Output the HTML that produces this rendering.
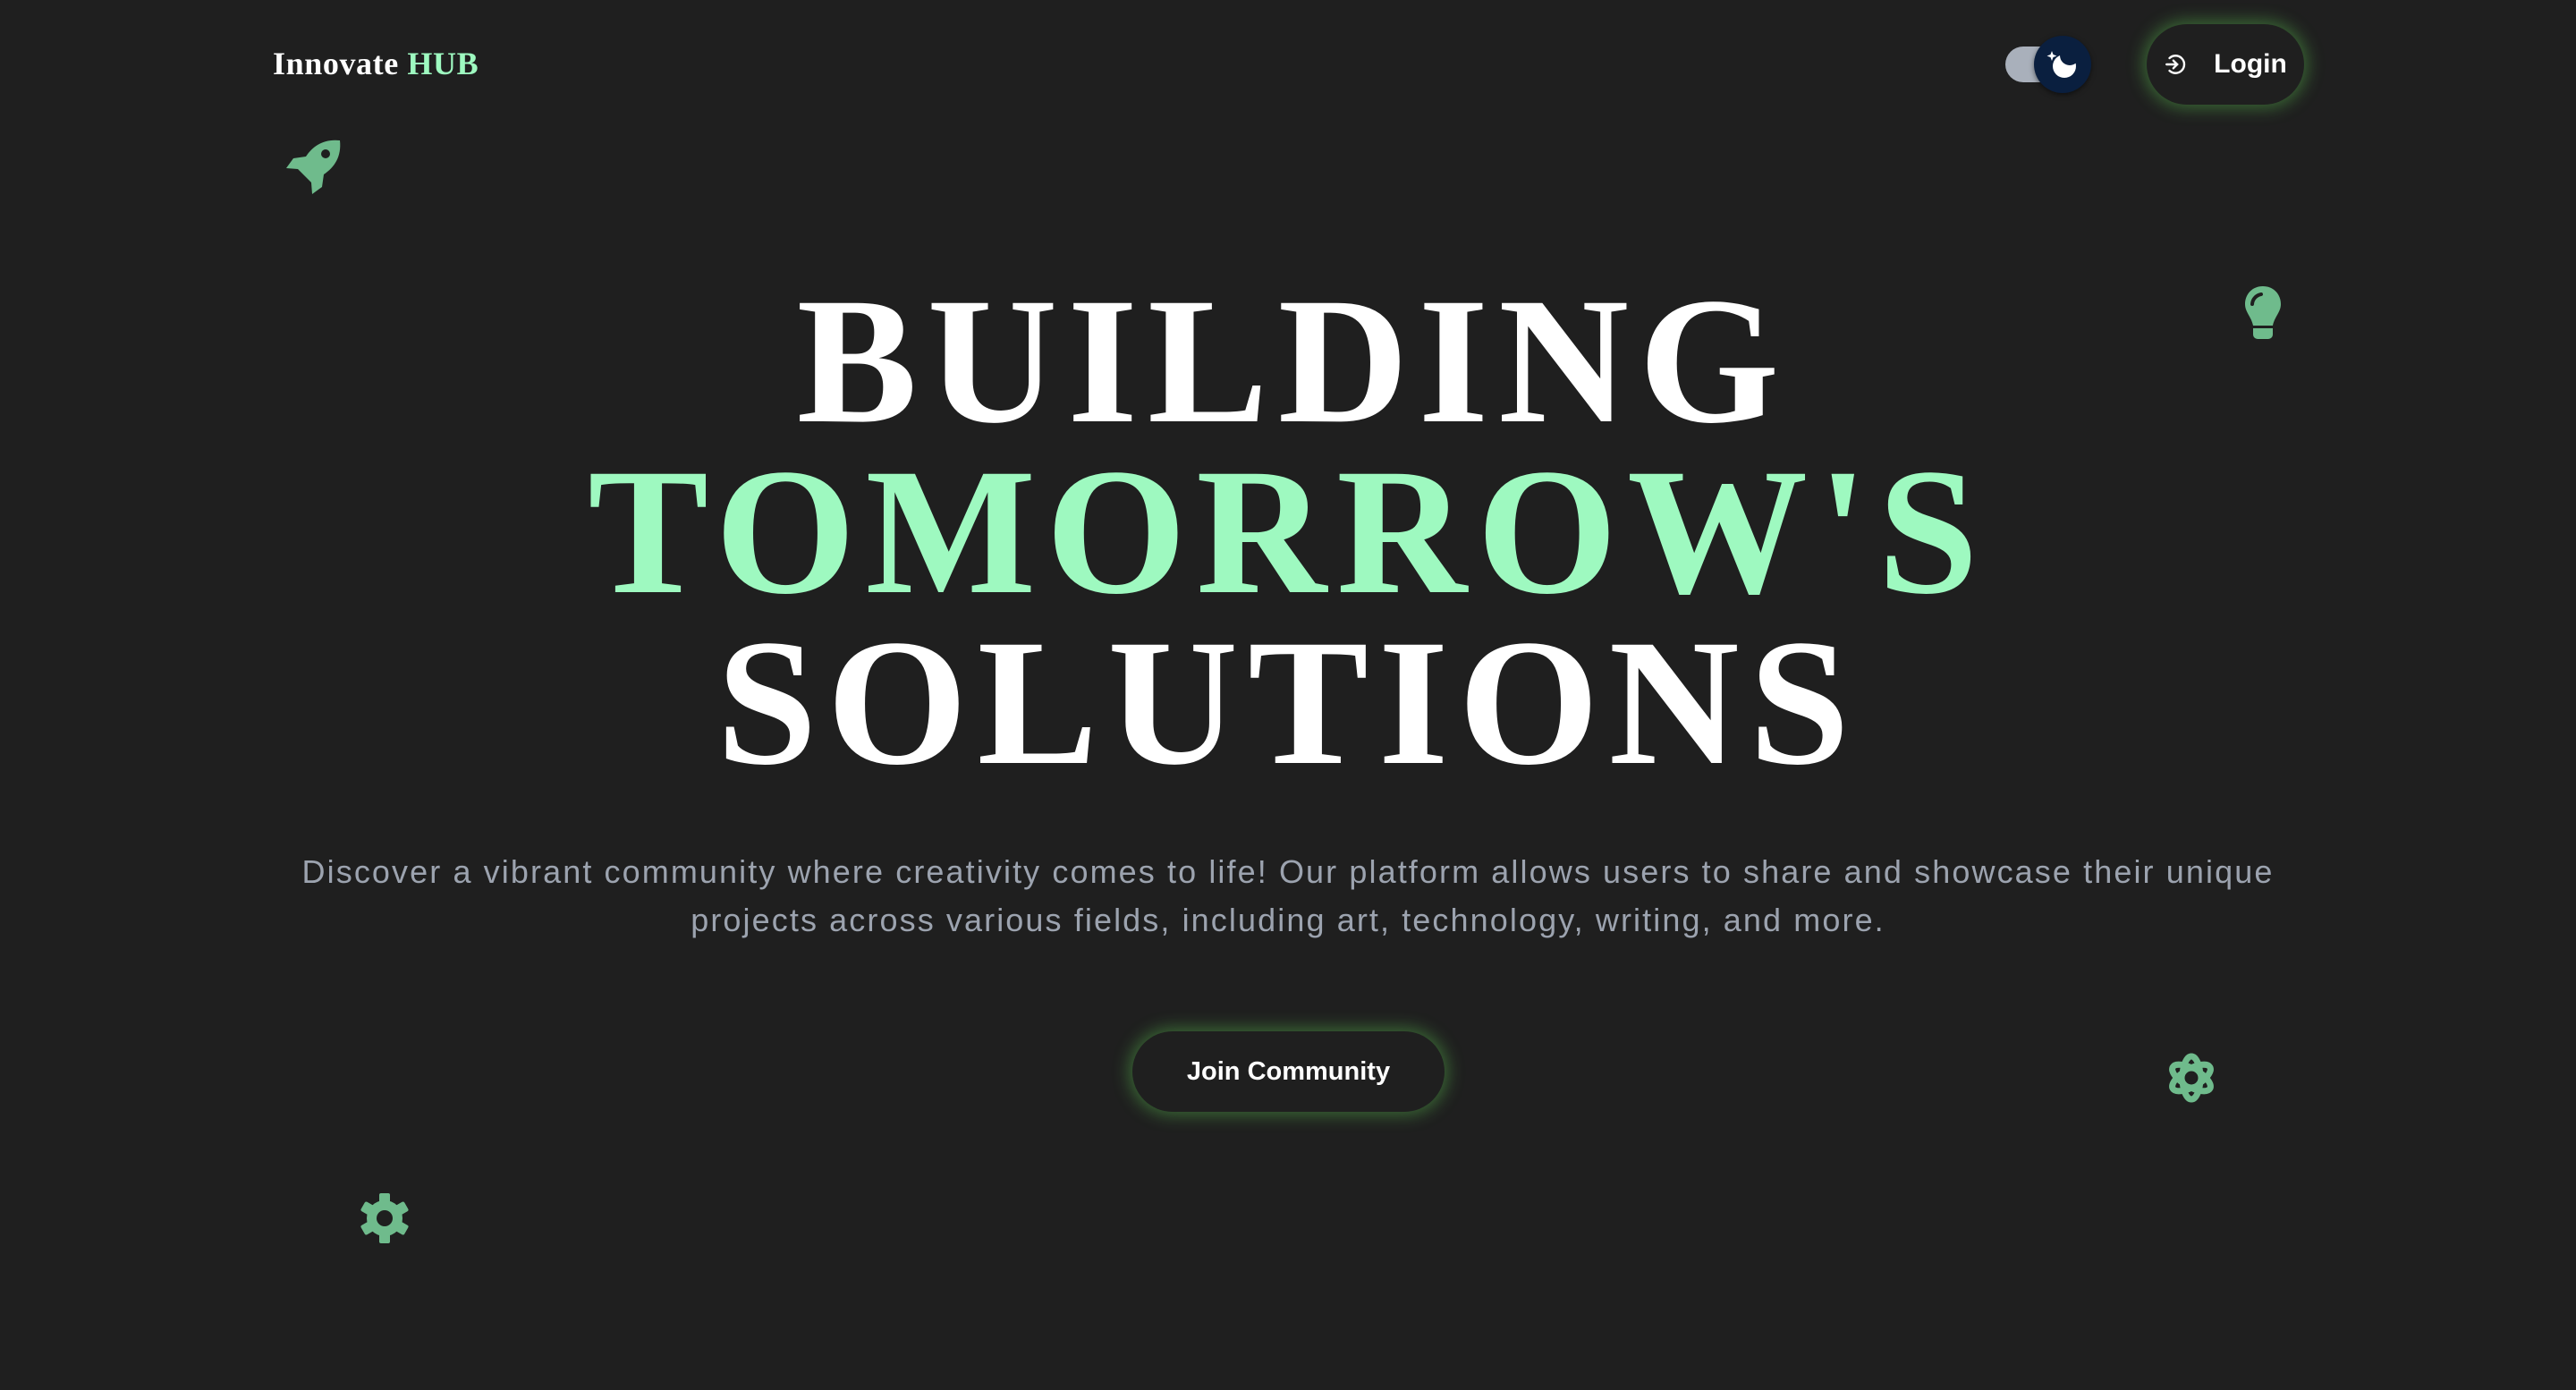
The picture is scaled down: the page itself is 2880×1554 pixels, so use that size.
<!DOCTYPE html>
<html><head><meta charset="utf-8"><style>
*{margin:0;padding:0;box-sizing:border-box}
body{width:2880px;height:1554px;background:#1f1f1f;overflow:hidden;position:relative;font-family:"Liberation Sans",sans-serif}
.abs{position:absolute}
.logo{left:305px;top:50px;font-family:"Liberation Serif",serif;font-weight:bold;font-size:36px;letter-spacing:0.6px;color:#fff;white-space:nowrap}
.logo span{color:#9ef9c0}
.h{left:0;width:2880px;text-align:center;font-family:"Liberation Serif",serif;font-weight:bold;font-size:202px;line-height:191px;top:308px;color:#fff;white-space:nowrap;letter-spacing:11px;text-indent:11px}
.h .g{color:#9ef9c0}
.p{left:0;width:2880px;top:948px;text-align:center;font-size:36px;line-height:54px;color:#9ca3af;letter-spacing:2.1px;white-space:nowrap}
.btn{background:#1f1f1f;border-radius:45px;height:90px;color:#fff;font-weight:bold;display:flex;align-items:center;justify-content:center;box-shadow:0 0 18px 4px rgba(90,190,80,0.45)}
</style></head><body>
<div class="abs logo">Innovate <span>HUB</span></div>

<div class="abs" style="left:2242px;top:52px;width:62px;height:40px;border-radius:20px;background:#a9b0bb"></div>
<div class="abs" style="left:2274px;top:40px;width:64px;height:64px;border-radius:50%;background:#0a1f3f;box-shadow:0 2px 6px rgba(0,0,0,.5)">
<svg width="64" height="64" viewBox="0 0 64 64"><defs><mask id="m"><rect width="64" height="64" fill="#fff"/><circle cx="40" cy="22" r="11" fill="#000"/></mask></defs><circle cx="34" cy="34" r="13" fill="#fff" mask="url(#m)"/><path d="M20 17 l1.5 4 4 1.5 -4 1.5 -1.5 4 -1.5 -4 -4 -1.5 4 -1.5z" fill="#fff"/></svg></div>

<div class="abs btn" style="left:2400px;top:27px;width:176px;font-size:30px">
<svg width="26" height="26" viewBox="0 0 24 24" style="margin-right:30px" fill="none" stroke="#fff" stroke-width="2.2" stroke-linecap="round"><path d="M6 5.5A9 9 0 1 1 6 18.5"/><path d="M3 12h11M10 8l4 4-4 4"/></svg>Login</div>

<svg class="abs" style="left:318px;top:153px" width="66" height="66" viewBox="0 0 66 66"><path d="M62 4 C44 2 32 10 24 22 L10 24 L2 35 L15 36 L30 51 L31 64 L42 56 L44 42 C56 34 64 22 62 4Z" fill="#6fbb8c"/><circle cx="46" cy="19" r="5" fill="#1f1f1f"/></svg>

<svg class="abs" style="left:2508px;top:318px" width="44" height="64" viewBox="0 0 44 64"><path d="M22 2C10 2 2 11 2 22c0 9 7 14 9 24h22c2-10 9-15 9-24C42 11 34 2 22 2Z" fill="#6fbb8c"/><path d="M11 49h22v7a5 5 0 0 1-5 5H16a5 5 0 0 1-5-5z" fill="#6fbb8c"/><path d="M10 22a12 12 0 0 1 10-11" stroke="#1f1f1f" stroke-width="4" fill="none" stroke-linecap="round"/></svg>

<svg class="abs" style="left:2422px;top:1175px" width="56" height="60" viewBox="0 0 56 60" fill="none" stroke="#6fbb8c" stroke-width="7"><ellipse cx="28" cy="30" rx="10" ry="24"/><ellipse cx="28" cy="30" rx="10" ry="24" transform="rotate(60 28 30)"/><ellipse cx="28" cy="30" rx="10" ry="24" transform="rotate(-60 28 30)"/><circle cx="28" cy="30" r="5" stroke="#1f1f1f" stroke-width="5"/></svg>

<svg class="abs" style="left:401px;top:1333px" width="58" height="58" viewBox="0 0 58 58"><g fill="#6fbb8c"><circle cx="29" cy="29" r="20"/><rect x="23" y="1" width="12" height="56" rx="2"/><rect x="23" y="1" width="12" height="56" rx="2" transform="rotate(60 29 29)"/><rect x="23" y="1" width="12" height="56" rx="2" transform="rotate(-60 29 29)"/></g><circle cx="29" cy="29" r="9" fill="#1f1f1f"/></svg>

<div class="abs h">BUILDING<br><span class="g">TOMORROW'S</span><br>SOLUTIONS</div>

<div class="abs p">Discover a vibrant community where creativity comes to life! Our platform allows users to share and showcase their unique<br>projects across various fields, including art, technology, writing, and more.</div>

<div class="abs btn" style="left:1266px;top:1153px;width:349px;font-size:29px">Join Community</div>
</body></html>
